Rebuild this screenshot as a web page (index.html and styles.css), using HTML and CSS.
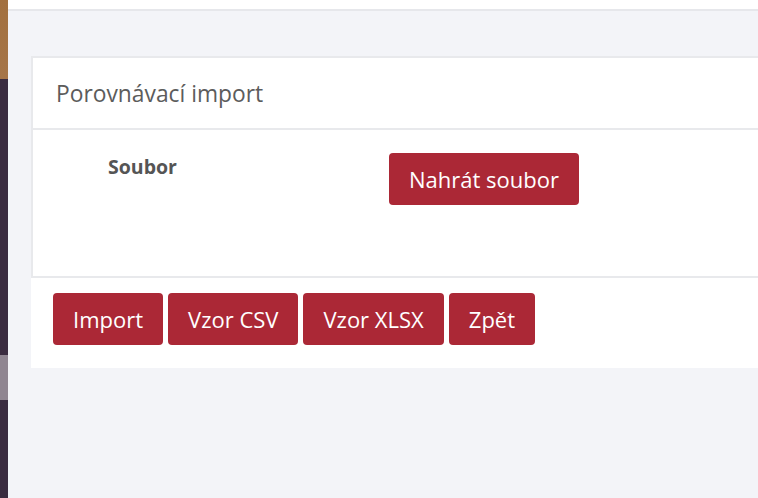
FILE: index.html
```html
<!DOCTYPE html>
<html lang="cs">
<head>
<meta charset="utf-8">
<title>Porovnávací import</title>
<link rel="stylesheet" href="styles.css">
</head>
<body>
<div class="app">
  <aside class="sidebar">
    <div class="sb-brand"></div>
    <div class="sb-dark sb-a"></div>
    <div class="sb-active"></div>
    <div class="sb-dark sb-b"></div>
  </aside>
  <main class="main">
    <div class="topbar"></div>
    <div class="content">
      <section class="card">
        <div class="panel">
          <div class="panel-head">Porovnávací import</div>
          <div class="panel-body">
            <div class="form-row">
              <label class="label">Soubor</label>
              <button class="btn btn-upload">Nahrát soubor</button>
            </div>
          </div>
        </div>
        <div class="actions">
          <button class="btn">Import</button>
          <button class="btn">Vzor CSV</button>
          <button class="btn">Vzor XLSX</button>
          <button class="btn">Zpět</button>
        </div>
      </section>
    </div>
  </main>
</div>
</body>
</html>
```
FILE: styles.css
```css
html, body {
  margin: 0;
  padding: 0;
  height: 100%;
  overflow: hidden;
  background: #f3f4f8;
  font-family: "Open Sans", "Noto Sans", sans-serif;
}
.app {
  display: flex;
  height: 498px;
}
.sidebar {
  width: 8px;
  flex: 0 0 8px;
  display: flex;
  flex-direction: column;
  background: #3a2c40;
}
.sb-brand {
  height: 79px;
  background: linear-gradient(180deg, #a2703f 0%, #a67548 100%);
}
.sb-a { height: 276px; }
.sb-active {
  height: 45px;
  background: #8f8591;
}
.sb-b { flex: 1; }
.main {
  flex: 1;
  min-width: 0;
  display: flex;
  flex-direction: column;
}
.topbar {
  height: 9px;
  background: #ffffff;
  border-bottom: 2px solid #e6e7eb;
}
.content {
  padding: 45px 0 0 23px;
}
.card {
  width: 780px;
  background: #ffffff;
}
.panel {
  border: 2px solid #e8e9ec;
}
.panel-head {
  height: 70px;
  display: flex;
  align-items: center;
  padding-left: 23px;
  font-size: 22.8px;
  color: #5c5c5c;
  border-bottom: 2px solid #e8e9ec;
}
.panel-body {
  height: 146px;
}
.form-row {
  display: flex;
  align-items: flex-start;
  padding: 23px 0 0 75px;
}
.label {
  width: 281px;
  font-size: 19.5px;
  font-weight: 700;
  color: #555555;
}
.btn {
  height: 52px;
  padding: 0 20px;
  border: none;
  border-radius: 4px;
  background: #ab2836;
  color: #ffffff;
  font-family: "Open Sans", "Noto Sans", sans-serif;
  font-size: 22px;
  line-height: 52px;
}
.btn-upload {
  padding: 0 20px;
}
.actions {
  display: flex;
  gap: 5px;
  padding: 15px 0 23px 22px;
}
```
